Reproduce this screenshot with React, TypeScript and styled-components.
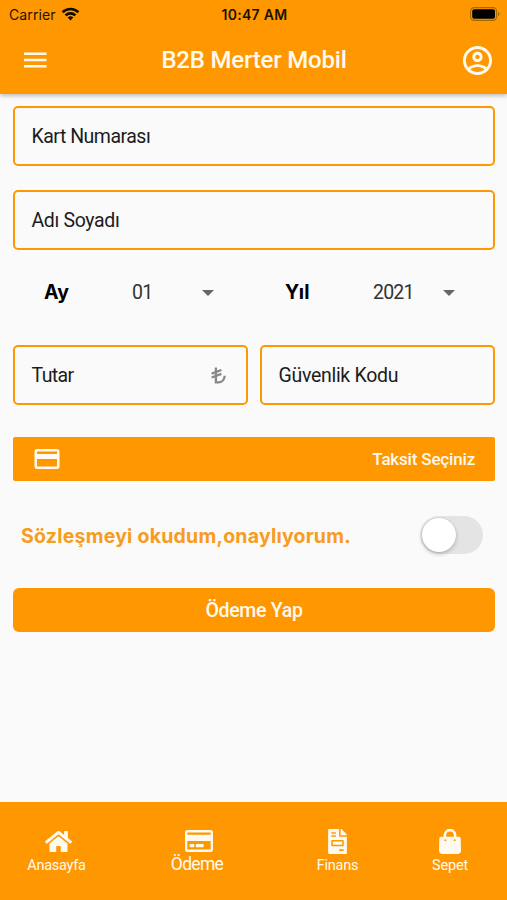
import React, { useState } from "react";
import styled, { createGlobalStyle } from "styled-components";
import { FaHome, FaRegCreditCard, FaFileInvoice } from "react-icons/fa";
import { MdOutlineCreditCard } from "react-icons/md";

const ORANGE = "#ff9800";

const GlobalStyle = createGlobalStyle`
  * { box-sizing: border-box; }
  body { margin: 0; background: #fafafa; }
  button { border: 0; padding: 0; background: none; font: inherit; color: inherit; }
`;

const Screen = styled.div`
  width: 507px;
  height: 900px;
  display: flex;
  flex-direction: column;
  background: #fafafa;
  font-family: Roboto, sans-serif;
  overflow: hidden;
`;

const Header = styled.header`
  height: 94px;
  flex: none;
  background: ${ORANGE};
  box-shadow: 0 2px 4px rgba(0, 0, 0, 0.24);
`;

const StatusBar = styled.div`
  height: 27px;
  padding: 0 7px 0 9px;
  display: grid;
  grid-template-columns: 1fr auto 1fr;
  align-items: center;
  color: #1c1200;
  font-family: Inter, sans-serif;
`;

const Carrier = styled.div`
  display: flex;
  align-items: center;
  gap: 5px;
`;

const StatusText = styled.span<{ $weight: number; $spacing: number }>`
  padding-top: 2px;
  font-size: 14px;
  font-weight: ${(p) => p.$weight};
  letter-spacing: ${(p) => p.$spacing}px;
  line-height: 17px;
  white-space: nowrap;
`;

const BatterySlot = styled.div`
  display: flex;
  justify-content: flex-end;
`;

const AppBar = styled.div`
  height: 66px;
  padding: 0 15px 0 23px;
  display: grid;
  grid-template-columns: 36px 1fr 29px;
  align-items: center;
  color: #fffaf0;
`;

const Text = styled.span<{ $size: number; $weight?: number; $spacing?: number; $color?: string; $font?: string }>`
  font-size: ${(p) => p.$size}px;
  font-weight: ${(p) => p.$weight ?? 400};
  letter-spacing: ${(p) => p.$spacing ?? 0}px;
  color: ${(p) => p.$color ?? "inherit"};
  font-family: ${(p) => p.$font ?? "inherit"};
  line-height: 1.2;
  white-space: nowrap;
`;

const Title = styled.h1`
  margin: 0;
  display: flex;
  justify-content: center;
  padding: 1px 14px 0 0;
`;

const Form = styled.main`
  flex: 1;
  padding: 12px 12px 0 13px;
  display: flex;
  flex-direction: column;
`;

const Field = styled.div<{ $gap?: number }>`
  height: 60px;
  margin-bottom: ${(p) => p.$gap ?? 0}px;
  padding: 2px 20px 0 16.5px;
  display: flex;
  align-items: center;
  justify-content: space-between;
  border: 2px solid ${ORANGE};
  border-radius: 5px;
  color: #1c1c1c;
`;

const DateRow = styled.div`
  height: 44px;
  margin: 20px 0 31px;
  padding-top: 2px;
  display: grid;
  grid-template-columns: 241px 1fr;
`;

const Picker = styled.div`
  display: grid;
  grid-template-columns: 88px 70px 1fr;
  padding-left: 31px;
  align-items: center;
`;

const Caret = styled.span`
  width: 0;
  height: 0;
  border: 6px solid transparent;
  border-top-color: #666;
  border-bottom-width: 0;
`;

const Pair = styled.div`
  display: grid;
  grid-template-columns: 1fr 1fr;
  gap: 12px;
`;

const Installment = styled.button`
  height: 44px;
  margin-top: 32px;
  padding: 0 20px 0 19px;
  display: flex;
  align-items: center;
  justify-content: space-between;
  border-radius: 2px;
  background: ${ORANGE};
  color: #fffaf0;
`;

const Agreement = styled.div`
  height: 107px;
  padding: 1px 12px 0 8px;
  display: flex;
  align-items: center;
  justify-content: space-between;
`;

const AgreementText = styled.label`
  padding-top: 2px;
  color: #f79c1c;
  font: 700 19.5px/23px Inter, sans-serif;
  letter-spacing: 0.22px;
  white-space: nowrap;
`;

const Toggle = styled.button<{ $on: boolean }>`
  width: 63px;
  height: 38px;
  padding: 2px;
  display: flex;
  justify-content: ${(p) => (p.$on ? "flex-end" : "flex-start")};
  border-radius: 19px;
  background: ${(p) => (p.$on ? ORANGE : "#e4e4e4")};
`;

const Knob = styled.span`
  width: 34px;
  height: 34px;
  border-radius: 50%;
  background: #fff;
  box-shadow: 0 0 0 0.5px rgba(0, 0, 0, 0.06), 0 2px 4px rgba(0, 0, 0, 0.22);
`;

const PayButton = styled.button`
  height: 44px;
  padding-top: 2px;
  border-radius: 6px;
  background: ${ORANGE};
  color: #fffaf0;
`;

const NavBar = styled.nav`
  height: 98px;
  flex: none;
  padding-top: 25px;
  display: grid;
  grid-template-columns: 113px 168px 113px 112px;
  background: ${ORANGE};
  color: #fffaf0;
`;

const NavItem = styled.a`
  display: flex;
  flex-direction: column;
  align-items: center;
`;

const NavIcon = styled.span<{ $shift?: number; $gap?: number }>`
  height: 28px;
  margin-bottom: ${(p) => p.$gap ?? 2}px;
  display: flex;
  align-items: center;
  padding-left: ${(p) => p.$shift ?? 0}px;
`;

const WifiIcon = () => (
  <svg width="19" height="14" viewBox="0 0 18 14" fill="none" stroke="#120b00" strokeWidth="2.6">
    <path d="M1.1 5.2a11.3 11.3 0 0 1 15.8 0" />
    <path d="M4.1 8.4a7 7 0 0 1 9.8 0" />
    <path d="M9 13.4 6.2 10.6a4 4 0 0 1 5.6 0z" fill="#120b00" stroke="none" />
  </svg>
);

const BatteryIcon = () => (
  <svg width="30" height="14" viewBox="0 0 30 14">
    <rect x="0.6" y="0.6" width="26" height="12.8" rx="3.6" fill="none" stroke="#a96500" strokeWidth="1.1" />
    <rect x="2.2" y="2.3" width="22.8" height="9.4" rx="2" fill="#000" />
    <path d="M28 4.8c2 .8 2 3.6 0 4.4z" fill="#a96500" />
  </svg>
);

const MenuIcon = () => (
  <svg width="24" height="16" viewBox="0 0 24 16" fill="currentColor">
    <path d="M1 0.5h22.5v2.4H1zM1 6.8h22.5v2.4H1zM1 13.1h22.5v2.4H1z" />
  </svg>
);

const ProfileIcon = () => (
  <svg width="29" height="29" viewBox="2 2 20 20" fill="currentColor">
    <path d="M12 2C6.48 2 2 6.48 2 12s4.48 10 10 10 10-4.48 10-10S17.52 2 12 2zM7.07 18.28c.43-.9 3.05-1.78 4.93-1.78s4.51.88 4.93 1.78C15.57 19.36 13.86 20 12 20s-3.57-.64-4.93-1.72zm11.29-1.45c-1.43-1.74-4.9-2.33-6.36-2.33s-4.93.59-6.36 2.33C4.62 15.49 4 13.82 4 12c0-4.41 3.59-8 8-8s8 3.59 8 8c0 1.82-.62 3.49-1.64 4.83zM12 6c-1.94 0-3.5 1.56-3.5 3.5S10.06 13 12 13s3.5-1.56 3.5-3.5S13.94 6 12 6zm0 5c-.83 0-1.5-.67-1.5-1.5S11.17 8 12 8s1.5.67 1.5 1.5S12.83 11 12 11z" />
  </svg>
);

const LiraIcon = () => (
  <svg width="15" height="19" viewBox="0 0 15 19" fill="none" stroke="#888" strokeWidth="2.3">
    <path d="M4.9 0.4V15.4H7.2C10.8 15.4 13.5 12.6 13.7 8.800M0.600 6.600 10.400 3M0.600 10.500 10.400 6.900" />
  </svg>
);

const BagIcon = () => (
  <svg width="22" height="25" viewBox="0 0 22 25">
    <path d="M5.900 10V6.200a5.100 5.100 0 0 1 10.200 0V10" fill="none" stroke="currentColor" strokeWidth="2.600" />
    <path d="M2.200 7.700h17.600c1.200 0 1.900.8 1.900 1.800L22 21.400c0 2-1.500 3.600-3.500 3.600h-15C1.500 25 0 23.400 0 21.400L.3 9.500c0-1 .7-1.800 1.900-1.800z" fill="currentColor" />
    <circle cx="6.300" cy="11.200" r="1" fill={ORANGE} />
    <circle cx="15.700" cy="11.200" r="1" fill={ORANGE} />
  </svg>
);

export default function App() {
  const [accepted, setAccepted] = useState(false);
  return (
    <Screen>
      <GlobalStyle />
      <Header>
        <StatusBar>
          <Carrier>
            <StatusText $weight={400} $spacing={0.1}>Carrier</StatusText>
            <WifiIcon />
          </Carrier>
          <StatusText $weight={600} $spacing={0.3}>10:47 AM</StatusText>
          <BatterySlot><BatteryIcon /></BatterySlot>
        </StatusBar>
        <AppBar>
          <MenuIcon />
          <Title><Text $size={24} $weight={500} $spacing={-0.2}>B2B Merter Mobil</Text></Title>
          <ProfileIcon />
        </AppBar>
      </Header>
      <Form>
        <Field $gap={24}><Text $size={19.5} $spacing={-0.5}>Kart Numarası</Text></Field>
        <Field><Text $size={19.5} $spacing={-0.35}>Adı Soyadı</Text></Field>
        <DateRow>
          <Picker>
            <Text $size={19.5} $weight={700} $color="#000" $font="Inter">Ay</Text>
            <Text $size={19.5} $spacing={-0.8} $color="#333">01</Text>
            <Caret />
          </Picker>
          <Picker>
            <Text $size={19.5} $weight={700} $color="#000" $font="Inter">Yıl</Text>
            <Text $size={19.5} $spacing={-0.8} $color="#333">2021</Text>
            <Caret />
          </Picker>
        </DateRow>
        <Pair>
          <Field><Text $size={19.5} $spacing={-0.6}>Tutar</Text><LiraIcon /></Field>
          <Field><Text $size={19.5} $spacing={-0.3}>Güvenlik Kodu</Text></Field>
        </Pair>
        <Installment>
          <MdOutlineCreditCard size={30} />
          <Text $size={17} $weight={500} $spacing={-0.18}>Taksit Seçiniz</Text>
        </Installment>
        <Agreement>
          <AgreementText>Sözleşmeyi okudum,onaylıyorum.</AgreementText>
          <Toggle $on={accepted} onClick={() => setAccepted(!accepted)} aria-label="Sözleşme onayı"><Knob /></Toggle>
        </Agreement>
        <PayButton><Text $size={19.5} $weight={500} $spacing={-0.3}>Ödeme Yap</Text></PayButton>
      </Form>
      <NavBar>
        <NavItem>
          <NavIcon $shift={4}><FaHome size={27} /></NavIcon>
          <Text $size={14.5} $spacing={-0.25}>Anasayfa</Text>
        </NavItem>
        <NavItem>
          <NavIcon $shift={4} $gap={-1}><FaRegCreditCard size={28} /></NavIcon>
          <Text $size={17.5} $spacing={-0.7}>Ödeme</Text>
        </NavItem>
        <NavItem>
          <NavIcon><FaFileInvoice size={25} /></NavIcon>
          <Text $size={14.5} $spacing={-0.25}>Finans</Text>
        </NavItem>
        <NavItem>
          <NavIcon><BagIcon /></NavIcon>
          <Text $size={14.5} $spacing={-0.2}>Sepet</Text>
        </NavItem>
      </NavBar>
    </Screen>
  );
}
